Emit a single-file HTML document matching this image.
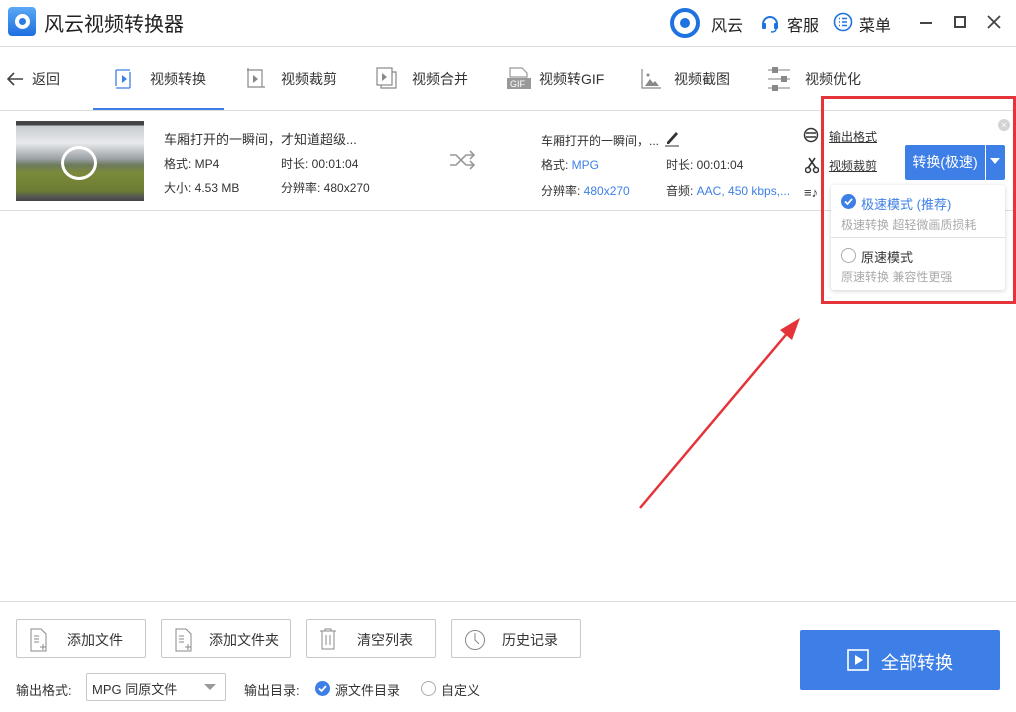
<!DOCTYPE html>
<html><head><meta charset="utf-8"><style>
*{margin:0;padding:0;box-sizing:border-box}
body{width:1016px;height:712px;background:#fff;font-family:"Liberation Sans","Noto Sans CJK SC",sans-serif;position:relative;overflow:hidden;color:#333}
.a{position:absolute;white-space:nowrap}
.btn{position:absolute;top:619px;width:130px;height:39px;border:1px solid #c8c8c8;border-radius:2px;font-size:14px;color:#333}
.btn span{position:absolute;left:50px;top:10px}
.btn svg{position:absolute;left:12px;top:8px}
.nav{position:absolute;top:69px;font-size:14px;color:#333}
.s{font-size:12px;color:#333}
.b{color:#3d7fe6}
</style></head><body>
<!-- title -->
<div class="a" style="left:8px;top:7px;width:28px;height:29px;border-radius:4px;background:linear-gradient(#5aa8f5,#1e6fe0)"></div>
<div class="a" style="left:15px;top:14px;width:15px;height:15px;border-radius:50%;background:#fff"></div>
<div class="a" style="left:19px;top:18px;width:7px;height:7px;border-radius:50%;background:#2a7ae6"></div>
<div class="a" style="left:44px;top:8px;font-size:20px;color:#222">风云视频转换器</div>
<div class="a" style="left:670px;top:8px;width:30px;height:30px;border-radius:50%;border:4px solid #1e73e0"></div>
<div class="a" style="left:680px;top:18px;width:10px;height:10px;border-radius:50%;background:#1e73e0"></div>
<div class="a" style="left:711px;top:12px;font-size:16px;color:#222">风云</div>
<svg class="a" style="left:760px;top:12px" width="20" height="22"><path d="M3 12a7 7 0 0 1 14 0" fill="none" stroke="#1e73e0" stroke-width="2"/><rect x="2" y="11" width="4" height="6" rx="1" fill="#1e73e0"/><rect x="14" y="11" width="4" height="6" rx="1" fill="#1e73e0"/><path d="M16 17q0 3-5 3" fill="none" stroke="#1e73e0" stroke-width="1.5"/></svg>
<div class="a" style="left:787px;top:12px;font-size:16px;color:#222">客服</div>
<svg class="a" style="left:833px;top:12px" width="20" height="20"><circle cx="10" cy="10" r="8.5" fill="none" stroke="#1e73e0" stroke-width="1.6"/><path d="M6 6.5h1M9 6.5h5M6 10h1M9 10h5M6 13.5h1M9 13.5h5" stroke="#1e73e0" stroke-width="1.5"/></svg>
<div class="a" style="left:859px;top:12px;font-size:16px;color:#222">菜单</div>
<div class="a" style="left:920px;top:22px;width:12px;height:2px;background:#444"></div>
<div class="a" style="left:954px;top:16px;width:12px;height:12px;border:2px solid #444"></div>
<svg class="a" style="left:987px;top:15px" width="14" height="14"><path d="M1 1L13 13M13 1L1 13" stroke="#444" stroke-width="1.8"/></svg>
<div class="a" style="left:0;top:46px;width:1016px;height:1px;background:#ddd"></div>
<!-- nav -->
<svg class="a" style="left:5px;top:70px" width="20" height="18"><path d="M18 9H3M9 3L3 9l6 6" fill="none" stroke="#444" stroke-width="1.6"/></svg>
<div class="nav" style="left:32px">返回</div>
<svg class="a" style="left:112px;top:66px" width="24" height="26"><path d="M4 4h14M4 4v16M18 22V6M4 22h14" fill="none" stroke="#3d7fe6" stroke-width="1.3"/><path d="M10 9l5 4-5 4z" fill="#3d7fe6"/></svg>
<div class="nav" style="left:150px">视频转换</div>
<svg class="a" style="left:244px;top:66px" width="24" height="26"><path d="M3 4h15v17M4 2v19h17" fill="none" stroke="#888" stroke-width="1.2"/><path d="M9 9l5 4-5 4z" fill="#888"/></svg>
<div class="nav" style="left:281px">视频裁剪</div>
<svg class="a" style="left:375px;top:66px" width="24" height="26"><rect x="2" y="2" width="15" height="17" fill="none" stroke="#888" stroke-width="1.2"/><path d="M17 6h4v16H6v-3" fill="none" stroke="#888" stroke-width="1.2"/><path d="M7 7l5 4-5 4z" fill="#888"/></svg>
<div class="nav" style="left:412px">视频合并</div>
<svg class="a" style="left:506px;top:66px" width="26" height="26"><path d="M4 2h12l5 5v4H4z" fill="none" stroke="#999" stroke-width="1.2"/><rect x="1" y="12" width="24" height="11" fill="#999"/><text x="4" y="21" font-size="9" fill="#fff" font-family="Liberation Sans">GIF</text></svg>
<div class="nav" style="left:539px">视频转GIF</div>
<svg class="a" style="left:639px;top:66px" width="24" height="26"><path d="M3 3v19h19" fill="none" stroke="#888" stroke-width="1.2"/><path d="M6 20l5-7 3 4 2-2 4 5z" fill="#888"/><circle cx="9" cy="9" r="1.5" fill="#888"/></svg>
<div class="nav" style="left:674px">视频截图</div>
<svg class="a" style="left:767px;top:66px" width="24" height="26"><path d="M1 4h22M1 13h22M1 22h22" stroke="#999" stroke-width="1.2"/><rect x="5" y="1" width="6" height="6" fill="#888"/><rect x="14" y="10" width="6" height="6" fill="#888"/><rect x="5" y="19" width="6" height="6" fill="#888"/></svg>
<div class="nav" style="left:805px">视频优化</div>
<div class="a" style="left:93px;top:108px;width:131px;height:2px;background:#3d7fe6"></div>
<div class="a" style="left:0;top:110px;width:1016px;height:1px;background:#ddd"></div>
<!-- file row -->
<div class="a" style="left:16px;top:121px;width:128px;height:80px;background:linear-gradient(#444 0,#444 4px,#c8ccd0 5px,#e8eaec 22px,#9aa0a4 38px,#6c7a5c 44px,#7a8a3a 52px,#6b7d33 70px,#555 76px,#444 80px)"></div>
<div class="a" style="left:61px;top:146px;width:36px;height:34px;border-radius:50%;border:3px solid #fff"></div>
<div class="a s" style="left:164px;top:129px;font-size:13px">车厢打开的一瞬间，才知道超级...</div>
<div class="a s" style="left:164px;top:155px">格式: MP4</div>
<div class="a s" style="left:281px;top:155px">时长: 00:01:04</div>
<div class="a s" style="left:164px;top:179px">大小: 4.53 MB</div>
<div class="a s" style="left:281px;top:179px">分辨率: 480x270</div>
<svg class="a" style="left:449px;top:150px" width="28" height="20"><path d="M1 5h6l10 10h8M1 15h6l10-10h8M21 1l4 4-4 4M21 11l4 4-4 4" fill="none" stroke="#999" stroke-width="1.6"/></svg>
<div class="a s" style="left:541px;top:132px">车厢打开的一瞬间，...</div>
<svg class="a" style="left:664px;top:129px" width="16" height="18"><path d="M3 13l9-10 2 2-9 10H3z" fill="#333"/><path d="M1 17h14" stroke="#333"/></svg>
<div class="a s" style="left:541px;top:156px">格式: <span class="b">MPG</span></div>
<div class="a s" style="left:666px;top:156px">时长: 00:01:04</div>
<div class="a s" style="left:541px;top:182px">分辨率: <span class="b">480x270</span></div>
<div class="a s" style="left:666px;top:182px">音频: <span class="b">AAC, 450 kbps,...</span></div>
<svg class="a" style="left:803px;top:127px" width="16" height="16"><circle cx="8" cy="8" r="6.5" fill="none" stroke="#333" stroke-width="1.5"/><path d="M3 6h10M3 10h10" stroke="#333" stroke-width="1.4"/></svg>
<svg class="a" style="left:805px;top:156px" width="14" height="18"><path d="M4 2l7 10M10 2L3 12" stroke="#333" stroke-width="1.6"/><circle cx="3" cy="14" r="2.5" fill="none" stroke="#333" stroke-width="1.5"/><circle cx="11" cy="14" r="2.5" fill="none" stroke="#333" stroke-width="1.5"/></svg>
<div class="a" style="left:804px;top:185px;font-size:13px;color:#333;font-weight:bold">≡♪</div>
<div class="a" style="left:0;top:210px;width:1016px;height:1px;background:#ddd"></div>
<!-- red box content -->
<div class="a" style="left:829px;top:128px;font-size:12px;text-decoration:underline">输出格式</div>
<div class="a" style="left:829px;top:157px;font-size:12px;text-decoration:underline">视频裁剪</div>
<div class="a" style="left:998px;top:119px;width:12px;height:12px;border-radius:50%;background:#d4d4d4;color:#fff;font-size:9px;line-height:12px;text-align:center">×</div>
<div class="a" style="left:905px;top:145px;width:80px;height:35px;background:#3d7fe6;color:#fff;font-size:14px;line-height:35px;text-align:center;border-radius:2px 0 0 2px">转换(极速)</div>
<div class="a" style="left:986px;top:145px;width:19px;height:35px;background:#3d7fe6;border-radius:0 2px 2px 0"></div>
<svg class="a" style="left:990px;top:158px" width="10" height="7"><path d="M0 0h10L5 6z" fill="#fff"/></svg>
<div class="a" style="left:831px;top:185px;width:174px;height:105px;background:#fff;box-shadow:0 1px 5px rgba(0,0,0,.18);border-radius:3px"></div>
<div class="a" style="left:831px;top:237px;width:174px;height:1px;background:#e2e2e2"></div>
<svg class="a" style="left:841px;top:194px" width="15" height="15"><circle cx="7.5" cy="7.5" r="7.5" fill="#3d7fe6"/><path d="M4 7.5l2.5 2.5 4.5-5" fill="none" stroke="#fff" stroke-width="1.8"/></svg>
<div class="a b" style="left:861px;top:194px;font-size:13px">极速模式 (推荐)</div>
<div class="a" style="left:841px;top:216px;font-size:12px;color:#aaa">极速转换 超轻微画质损耗</div>
<div class="a" style="left:841px;top:248px;width:15px;height:15px;border-radius:50%;border:1px solid #aaa"></div>
<div class="a" style="left:861px;top:247px;font-size:13px;color:#333">原速模式</div>
<div class="a" style="left:841px;top:268px;font-size:12px;color:#aaa">原速转换 兼容性更强</div>
<div class="a" style="left:821px;top:96px;width:195px;height:208px;border:3px solid #e5333a"></div>
<!-- arrow -->
<svg class="a" style="left:630px;top:310px" width="180" height="210"><path d="M10 198L165 14" stroke="#e5333a" stroke-width="2.5"/><path d="M170 8L150 20L162 30z" fill="#e5333a"/></svg>
<!-- bottom -->
<div class="a" style="left:0;top:601px;width:1016px;height:1px;background:#ddd"></div>
<div class="btn" style="left:16px"><svg width="20" height="24"><path d="M2 1h10l5 5v17H2z" fill="none" stroke="#888"/><path d="M5 8h5M5 11h5M5 14h5M11 19h6M14 16v6" stroke="#888"/></svg><span>添加文件</span></div>
<div class="btn" style="left:161px"><svg width="20" height="24"><path d="M2 1h10l5 5v17H2z" fill="none" stroke="#888"/><path d="M5 8h5M5 11h5M5 14h5M11 19h6M14 16v6" stroke="#888"/></svg><span style="left:47px">添加文件夹</span></div>
<div class="btn" style="left:306px"><svg width="20" height="24"><path d="M1 3h16M6 3V1h6v2M3 3v18h12V3M7 7v10M11 7v10" fill="none" stroke="#888"/></svg><span>清空列表</span></div>
<div class="btn" style="left:451px"><svg width="22" height="24"><circle cx="11" cy="12" r="9.5" fill="none" stroke="#888"/><path d="M11 5v7l4 4" fill="none" stroke="#888"/></svg><span>历史记录</span></div>
<div class="a" style="left:800px;top:630px;width:200px;height:60px;background:#3d7fe6;border-radius:2px"></div>
<svg class="a" style="left:847px;top:649px" width="22" height="22"><rect x="1" y="1" width="20" height="20" fill="none" stroke="#fff" stroke-width="1.6"/><path d="M8 6l8 5-8 5z" fill="#fff"/></svg>
<div class="a" style="left:881px;top:649px;font-size:18px;color:#fff">全部转换</div>
<div class="a" style="left:16px;top:680px;font-size:13px">输出格式:</div>
<div class="a" style="left:86px;top:673px;width:140px;height:28px;border:1px solid #c8c8c8;border-radius:2px"></div>
<div class="a" style="left:92px;top:679px;font-size:13px">MPG 同原文件</div>
<svg class="a" style="left:204px;top:684px" width="12" height="7"><path d="M0 0h12L6 6z" fill="#999"/></svg>
<div class="a" style="left:244px;top:680px;font-size:13px">输出目录:</div>
<svg class="a" style="left:315px;top:681px" width="15" height="15"><circle cx="7.5" cy="7.5" r="7.5" fill="#3d7fe6"/><path d="M4 7.5l2.5 2.5 4.5-5" fill="none" stroke="#fff" stroke-width="1.8"/></svg>
<div class="a" style="left:335px;top:680px;font-size:13px">源文件目录</div>
<div class="a" style="left:421px;top:681px;width:15px;height:15px;border-radius:50%;border:1px solid #aaa"></div>
<div class="a" style="left:441px;top:680px;font-size:13px">自定义</div>
</body></html>
